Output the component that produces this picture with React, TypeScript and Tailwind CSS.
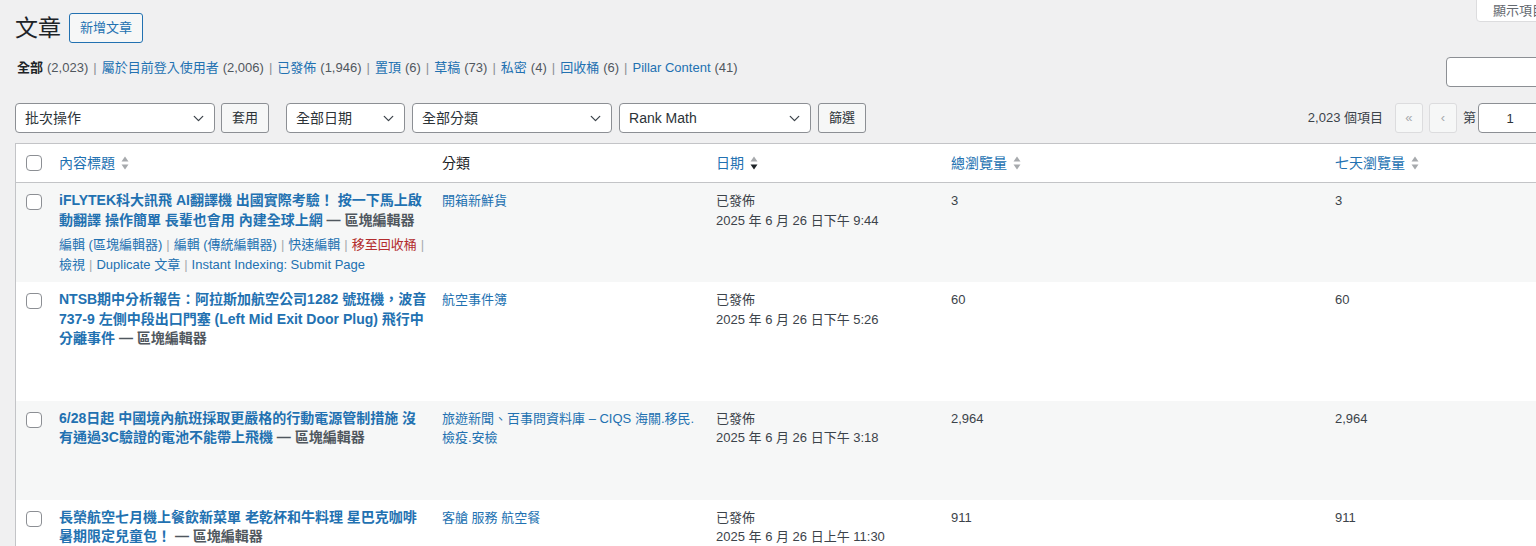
import { ChevronDown } from 'lucide-react';
import type { ReactNode } from 'react';

// Shared font stack: Latin first, then Traditional Chinese
const FONT = "font-['Liberation_Sans','Noto_Sans_CJK_TC',sans-serif]";

// Grid used by both the header and every post row
const COLS = 'grid grid-cols-[33px_383px_274px_235px_384px_1fr]';

type Post = {
  title: string[];
  category: ReactNode;
  time: string;
  total: string;
  week: string;
  hover?: boolean;
};

const posts: Post[] = [
  {
    title: ['iFLYTEK科大訊飛 AI翻譯機 出國實際考驗！ 按一下馬上啟', '動翻譯 操作簡單 長輩也會用 內建全球上網'],
    category: <a className="text-[#2271b1]">開箱新鮮貨</a>,
    time: '2025 年 6 月 26 日下午 9:44',
    total: '3',
    week: '3',
    hover: true,
  },
  {
    title: [
      'NTSB期中分析報告：阿拉斯加航空公司1282 號班機，波音',
      '737-9 左側中段出口門塞 (Left Mid Exit Door Plug) 飛行中',
      '分離事件',
    ],
    category: <a className="text-[#2271b1]">航空事件簿</a>,
    time: '2025 年 6 月 26 日下午 5:26',
    total: '60',
    week: '60',
  },
  {
    title: ['6/28日起 中國境內航班採取更嚴格的行動電源管制措施 沒', '有通過3C驗證的電池不能帶上飛機'],
    category: (
      <>
        <a className="text-[#2271b1]">旅遊新聞</a>
        <span className="text-[#2271b1]">、</span>
        <a className="text-[#2271b1]">百事問資料庫 – CIQS 海關.移民.</a>
        <br />
        <a className="text-[#2271b1]">檢疫.安檢</a>
      </>
    ),
    time: '2025 年 6 月 26 日下午 3:18',
    total: '2,964',
    week: '2,964',
  },
  {
    title: ['長榮航空七月機上餐飲新菜單 老乾杯和牛料理 星巴克咖啡', '暑期限定兒童包！'],
    category: <a className="text-[#2271b1]">客艙 服務 航空餐</a>,
    time: '2025 年 6 月 26 日上午 11:30',
    total: '911',
    week: '911',
  },
];

const views = [
  { label: '全部', count: '2,023', current: true },
  { label: '屬於目前登入使用者', count: '2,006' },
  { label: '已發佈', count: '1,946' },
  { label: '置頂', count: '6' },
  { label: '草稿', count: '73' },
  { label: '私密', count: '4' },
  { label: '回收桶', count: '6' },
  { label: 'Pillar Content', count: '41' },
];

function Checkbox() {
  return <span className="block h-4 w-4 rounded-[4px] border border-[#8c8f94] bg-white" />;
}

function SortIcon({ active }: { active?: boolean }) {
  return (
    <svg width="8" height="16" viewBox="0 0 8 16" className="ml-[6px]">
      <path d="M0.5 6.5 L4 1.5 L7.5 6.5 Z" fill="#a7aaad" />
      <path d="M0.5 9.5 L7.5 9.5 L4 14.5 Z" fill={active ? '#1d2327' : '#a7aaad'} />
    </svg>
  );
}

function Select({ label, w }: { label: string; w: string }) {
  return (
    <div
      className={`flex h-[30px] items-center justify-between rounded-[4px] border border-[#8c8f94] bg-white pl-[9px] pr-[7px] text-[14px] text-[#2c3338] ${w}`}
    >
      <span>{label}</span>
      <ChevronDown size={17} strokeWidth={1.8} className="text-[#3c434a]" />
    </div>
  );
}

function GrayButton({ children }: { children: ReactNode }) {
  return (
    <button className="flex h-[30px] items-center rounded-[3px] border border-[#8c8f94] bg-[#f6f7f7] px-[10px] text-[13px] text-[#2c3338]">
      {children}
    </button>
  );
}

function Sep() {
  return <span className="mx-[4px] text-[#a7aaad]">|</span>;
}

function RowActions({ hidden }: { hidden?: boolean }) {
  return (
    <div className={`pt-[2px] text-[13px] leading-[19.5px] text-[#2271b1] ${hidden ? 'invisible' : ''}`}>
      <div className="whitespace-nowrap">
        編輯 (區塊編輯器)
        <Sep />
        編輯 (傳統編輯器)
        <Sep />
        快速編輯
        <Sep />
        <span className="text-[#b32d2e]">移至回收桶</span>
        <span className="ml-[4px] text-[#a7aaad]">|</span>
      </div>
      <div className="whitespace-nowrap">
        檢視
        <Sep />
        Duplicate 文章
        <Sep />
        Instant Indexing: Submit Page
      </div>
    </div>
  );
}

function PostRow({ post, striped }: { post: Post; striped: boolean }) {
  return (
    <div className={`${COLS} ${striped ? 'bg-[#f6f7f7]' : 'bg-white'}`}>
      <div className="pl-[10px] pt-[11px]">
        <Checkbox />
      </div>
      <div className="px-[10px] pb-[8px] pt-[8px]">
        <strong className="mb-[3px] block whitespace-nowrap text-[14px] font-semibold leading-[19.5px] text-[#2271b1]">
          {post.title.map((line, i) => (
            <div key={i}>
              {line}
              {i === post.title.length - 1 && <span className="text-[#50575e]"> — 區塊編輯器</span>}
            </div>
          ))}
        </strong>
        <RowActions hidden={!post.hover} />
      </div>
      <div className="px-[10px] pt-[8px] text-[13px] leading-[19.5px]">{post.category}</div>
      <div className="px-[10px] pt-[8px] text-[13px] leading-[19.5px] text-[#3c434a]">
        已發佈
        <br />
        {post.time}
      </div>
      <div className="px-[10px] pt-[8px] text-[13px] leading-[19.5px] text-[#3c434a]">{post.total}</div>
      <div className="px-[10px] pt-[8px] text-[13px] leading-[19.5px] text-[#3c434a]">{post.week}</div>
    </div>
  );
}

export default function App() {
  return (
    <div className="h-[546px] w-full overflow-hidden bg-[#f0f0f1]">
      <div className={`relative w-[1685px] px-[15px] pt-[13px] ${FONT}`}>
        {/* Screen options tab */}
        <div className="absolute left-[1476px] top-[-1px] h-[23px] w-[130px] rounded-b-[4px] border border-[#dcdcde] bg-white pl-[16px] text-[13px] leading-[21px] text-[#646970]">
          顯示項目
        </div>

        {/* Page title */}
        <div className="flex h-[30px] items-center">
          <h1 className="text-[23px] font-normal leading-[30px] text-[#1d2327]">文章</h1>
          <a className="ml-[8px] flex h-[30px] items-center rounded-[3px] border border-[#2271b1] bg-[#f6f7f7] px-[10px] text-[13px] text-[#2271b1]">
            新增文章
          </a>
        </div>

        {/* Status views + search */}
        <div className="mt-[14px] flex h-[30px] items-start">
          <ul className="flex pl-[2px] pt-[1px] text-[13px] leading-[20px] text-[#646970]">
            {views.map((v, i) => (
              <li key={v.label} className="flex whitespace-nowrap">
                {i > 0 && <span className="mx-[5px] text-[#8c8f94]">|</span>}
                <span className={v.current ? 'font-semibold text-[#1d2327]' : 'text-[#2271b1]'}>{v.label}</span>
                <span className="ml-[4px] text-[#50575e]">({v.count})</span>
              </li>
            ))}
          </ul>
          <div className="ml-auto flex gap-[4px]">
            <input className="h-[30px] w-[146px] rounded-[4px] border border-[#8c8f94] bg-white" />
            <GrayButton>搜尋文章</GrayButton>
          </div>
        </div>

        {/* Bulk actions, filters and pagination */}
        <div className="mt-[16px] flex h-[30px] items-center">
          <Select label="批次操作" w="w-[200px]" />
          <div className="ml-[6px]">
            <GrayButton>套用</GrayButton>
          </div>
          <div className="ml-[17px]">
            <Select label="全部日期" w="w-[119px]" />
          </div>
          <div className="ml-[7px]">
            <Select label="全部分類" w="w-[200px]" />
          </div>
          <div className="ml-[7px]">
            <Select label="Rank Math" w="w-[192px]" />
          </div>
          <div className="ml-[7px]">
            <GrayButton>篩選</GrayButton>
          </div>

          <div className="ml-auto flex items-center text-[13px] text-[#3c434a]">
            <span className="mr-[12px]">2,023 個項目</span>
            <span className="flex h-[30px] w-[28px] items-center justify-center rounded-[3px] border border-[#dcdcde] bg-[#f6f7f7] text-[#a7aaad]">
              «
            </span>
            <span className="ml-[6px] flex h-[30px] w-[28px] items-center justify-center rounded-[3px] border border-[#dcdcde] bg-[#f6f7f7] text-[#a7aaad]">
              ‹
            </span>
            <span className="ml-[6px]">第</span>
            <input
              readOnly
              value="1"
              className="ml-[2px] h-[30px] w-[64px] rounded-[4px] border border-[#8c8f94] bg-white text-center text-[13px] text-[#2c3338]"
            />
            <span className="ml-[6px] w-[54px]">/ 102 頁</span>
            <span className="ml-[6px] flex h-[30px] w-[28px] items-center justify-center rounded-[3px] border border-[#2271b1] bg-[#f6f7f7] text-[#2271b1]">
              ›
            </span>
            <span className="ml-[6px] flex h-[30px] w-[28px] items-center justify-center rounded-[3px] border border-[#2271b1] bg-[#f6f7f7] text-[#2271b1]">
              »
            </span>
          </div>
        </div>

        {/* Posts table */}
        <div className="mt-[10px] border border-[#c3c4c7] bg-white">
          <div className={`${COLS} h-[39px] border-b border-[#c3c4c7] text-[14px]`}>
            <div className="flex items-center pl-[10px]">
              <Checkbox />
            </div>
            <div className="flex items-center px-[10px] text-[#2271b1]">
              內容標題
              <SortIcon />
            </div>
            <div className="flex items-center px-[10px] text-[#1d2327]">分類</div>
            <div className="flex items-center px-[10px] text-[#2271b1]">
              日期
              <SortIcon active />
            </div>
            <div className="flex items-center px-[10px] text-[#2271b1]">
              總瀏覽量
              <SortIcon />
            </div>
            <div className="flex items-center px-[10px] text-[#2271b1]">
              七天瀏覽量
              <SortIcon />
            </div>
          </div>
          {posts.map((p, i) => (
            <PostRow key={i} post={p} striped={i % 2 === 0} />
          ))}
        </div>
      </div>
    </div>
  );
}
